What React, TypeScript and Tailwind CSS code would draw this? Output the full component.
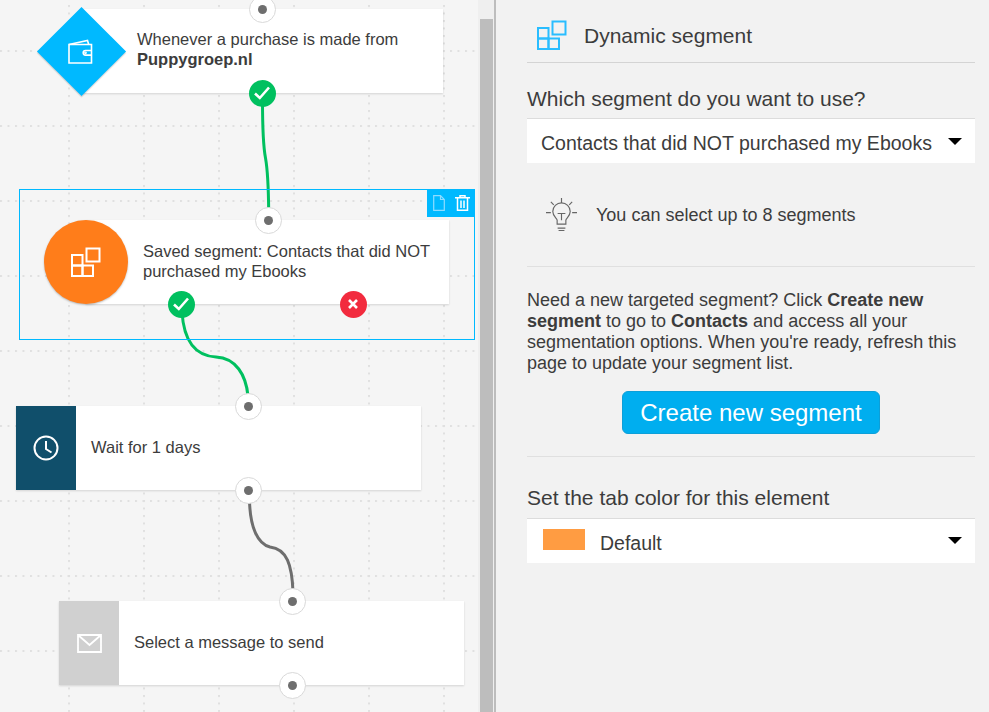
const FONT = "font-['Liberation_Sans',Arial,sans-serif]";

function SegmentIcon({ className }: { className?: string }) {
  return (
    <svg viewBox="0 0 30 30" className={className} fill="none" stroke="currentColor" strokeWidth="2">
      <rect x="1" y="8" width="10.500" height="10.500" />
      <rect x="1" y="18.500" width="10.500" height="10.500" />
      <rect x="11.500" y="18.500" width="10.500" height="10.500" />
      <rect x="15.500" y="1.500" width="13" height="13" />
    </svg>
  );
}

function Port({ x, y }: { x: number; y: number }) {
  return (
    <div
      className="absolute w-[27px] h-[27px] -ml-[13.5px] -mt-[13.5px] rounded-full bg-white border border-[#d9d9d9] flex items-center justify-center"
      style={{ left: x, top: y }}
    >
      <div className="w-[9px] h-[9px] rounded-full bg-[#6e6e6e]" />
    </div>
  );
}

function Badge({ x, y, kind }: { x: number; y: number; kind: "ok" | "no" }) {
  return (
    <div
      className={`absolute w-[27px] h-[27px] -ml-[13.5px] -mt-[13.5px] rounded-full flex items-center justify-center ${
        kind === "ok" ? "bg-[#00c05f]" : "bg-[#f22b3e]"
      }`}
      style={{ left: x, top: y }}
    >
      {kind === "ok" ? (
        <svg viewBox="0 0 18 18" className="w-[18px] h-[18px]" fill="none" stroke="#fff" strokeWidth="2.6">
          <path d="M2 9.500l4.800 4.500L16 3.500" />
        </svg>
      ) : (
        <svg viewBox="0 0 10 10" className="w-[10px] h-[10px]" fill="none" stroke="#fff" strokeWidth="2.6">
          <path d="M1 1l8 8M9 1l-8 8" />
        </svg>
      )}
    </div>
  );
}

function Canvas() {
  return (
    <div className="relative w-[478px] h-[712px] shrink-0 overflow-hidden bg-[#f5f5f5]">
      {/* dotted grid */}
      <svg className="absolute inset-0" width="478" height="712">
        <defs>
          <pattern id="h" x="0" y="50" width="7.5" height="75" patternUnits="userSpaceOnUse">
            <rect x="0" y="0" width="2" height="2" fill="#e0e0e0" />
          </pattern>
          <pattern id="v" x="68" y="5" width="75" height="7.5" patternUnits="userSpaceOnUse">
            <rect x="0" y="0" width="2" height="2" fill="#e0e0e0" />
          </pattern>
        </defs>
        <rect width="476" height="712" fill="url(#h)" />
        <rect width="476" height="712" fill="url(#v)" />
      </svg>

      {/* trigger */}
      <div className="absolute left-[81px] top-[9px] w-[362px] h-[84px] bg-white shadow-[0_1px_2px_rgba(0,0,0,0.14)] flex items-center pl-[56px] text-[16.5px] leading-[20px] text-[#3c3c3c]">
        <div className="-mt-[5px]">
          Whenever a purchase is made from
          <br />
          <b>Puppygroep.nl</b>
        </div>
      </div>
      <div className="absolute left-[50px] top-[20px] w-[63px] h-[63px] rotate-45 bg-[#00b9ff] shadow-[1px_1px_1px_rgba(0,0,0,0.15)]" />
      <svg viewBox="0 0 25 25" className="absolute left-[67.5px] top-[38.5px] w-[25px] h-[25px]" fill="none" stroke="#fff" strokeWidth="1.6">
        <path d="M1 5.500V24h22.500V5.500z" />
        <path d="M1 5.500L19.500 1.500l1.200 4" />
        <path d="M23.500 11.500h-6a2.300 2.300 0 0 0 0 4.600h6" />
        <circle cx="17.500" cy="13.800" r="0.6" />
      </svg>

      {/* wires */}
      <svg className="absolute inset-0" width="478" height="712" fill="none" strokeWidth="3">
        <path d="M262.500 100C262.500 130 263 145 265.500 158C268 172 268.500 190 268.700 212" stroke="#00c05f" />
        <path d="M182 312C184 345 198 356 216 357C236 358 246 375 248 396" stroke="#00c05f" />
        <path d="M249.500 500C250 528 258 544 270 547C287 549 292 565 293 592" stroke="#6e6e6e" />
      </svg>

      {/* segment */}
      <div className="absolute left-[19px] top-[189px] w-[456px] h-[151px] border border-[#00b9ff]">
        <div className="absolute right-[-1px] top-[-1px] w-[48px] h-[28px] bg-[#00b9ff] flex items-center gap-[10px] pl-[6px]">
          <svg viewBox="0 0 12 16" className="w-[12px] h-[16px]" fill="none" stroke="#8fdcff" strokeWidth="1.2">
            <path d="M.7.7h6.800l3.800 3.800v10.800H.7zM7.500.7v3.800h3.800" />
          </svg>
          <svg viewBox="0 0 15 16" className="w-[15px] h-[16px]" fill="none" stroke="#fff" strokeWidth="1.5">
            <path d="M0 2.800h15M5 2.800V.8h5v2M2.500 2.800v12.500h10V2.800M6 5.500v7.500M9 5.500v7.500" />
          </svg>
        </div>
      </div>
      <div className="absolute left-[86px] top-[220px] w-[363px] h-[84px] bg-white shadow-[0_1px_2px_rgba(0,0,0,0.14)] flex items-center pl-[57px] text-[16.5px] leading-[20px] text-[#3c3c3c]">
        <div className="-mt-[3px]">
          Saved segment: Contacts that did NOT
          <br />
          purchased my Ebooks
        </div>
      </div>
      <div className="absolute left-[44px] top-[220px] w-[84px] h-[84px] rounded-full bg-[#ff7d1a] shadow-[0_1px_2px_rgba(0,0,0,0.25)] flex items-center justify-center text-white">
        <SegmentIcon className="w-[30px] h-[30px]" />
      </div>

      {/* wait */}
      <div className="absolute left-[16px] top-[406px] w-[405px] h-[84px] bg-white shadow-[0_1px_2px_rgba(0,0,0,0.14)] flex items-center text-[16.5px] text-[#3c3c3c]">
        <div className="w-[60px] h-full bg-[#104f6b] flex items-center justify-center">
          <svg viewBox="0 0 26 26" className="w-[26px] h-[26px]" fill="none" stroke="#fff" strokeWidth="2">
            <circle cx="13" cy="13" r="11.500" />
            <path d="M13 6v8l5.500 3.500" />
          </svg>
        </div>
        <span className="ml-[15px] -mt-[1px]">Wait for 1 days</span>
      </div>

      {/* message */}
      <div className="absolute left-[59px] top-[601px] w-[405px] h-[84px] bg-white shadow-[0_1px_2px_rgba(0,0,0,0.14)] flex items-center text-[16.5px] text-[#3c3c3c]">
        <div className="w-[60px] h-full bg-[#d0d0d0] flex items-center justify-center">
          <svg viewBox="0 0 25 19" className="w-[25px] h-[19px]" fill="none" stroke="#fff" strokeWidth="1.8">
            <path d="M1 1h23v17H1zM1 1l11.500 10L24 1" />
          </svg>
        </div>
        <span className="ml-[15px] -mt-[1px]">Select a message to send</span>
      </div>

      <Port x={262} y={9} />
      <Port x={268} y={220} />
      <Port x={248} y={406} />
      <Port x={248} y={490} />
      <Port x={292} y={601} />
      <Port x={292} y={685} />
      <Badge x={262} y={93} kind="ok" />
      <Badge x={181} y={304} kind="ok" />
      <Badge x={353} y={304} kind="no" />
    </div>
  );
}

function Caret() {
  return <div className="w-0 h-0 border-x-[7.500px] border-x-transparent border-t-[7px] border-t-black" />;
}

export default function App() {
  return (
    <div className={`${FONT} w-[989px] h-[712px] overflow-hidden flex bg-[#f2f2f2]`}>
      <Canvas />

      {/* scrollbar */}
      <div className="w-[18px] h-[712px] shrink-0 bg-[#efefef] border-r-2 border-[#bdbdbd] pt-[19px] pl-[2px]">
        <div className="w-[13px] h-full bg-[#bdbdbd]" />
      </div>

      <div className="flex-1 pl-[31px] pr-[14px] text-[#3c3c3c]">
        <div className="h-[63px] border-b border-[#d4d4d4] flex items-start pt-[20px] pl-[10px] gap-[17px]">
          <SegmentIcon className="w-[30px] h-[30px] text-[#29bdff]" />
          <span className="text-[21px] leading-[30px] mt-[1px]">Dynamic segment</span>
        </div>

        <div className="mt-[23px] text-[21px] leading-[26px]">Which segment do you want to use?</div>
        <div className="mt-[6px] h-[45px] bg-white border-t border-[#dcdcdc] flex items-center justify-between pl-[14px] pr-[13px] text-[19.5px]">
          <span className="mt-[6px]">Contacts that did NOT purchased my Ebooks</span>
          <div className="mt-[1px]">
            <Caret />
          </div>
        </div>

        <div className="h-[104px] border-b border-[#e0e0e0] flex items-center pl-[19px] gap-[19px]">
          <svg viewBox="0 0 32 34" className="w-[31px] h-[33px]" fill="none" stroke="#666" strokeWidth="1.2">
            <path d="M16 0v5M5 4l3 3M27 4l-3 3M0 15h5M27 15h5" />
            <path d="M11.500 27v-4c0-2-4.500-4-4.500-9a9 9 0 0 1 18 0c0 5-4.500 7-4.500 9v4zM12 16h8M16 16v7M12 31h8M13 33.500h6" />
          </svg>
          <span className="text-[18px] mt-[2px]">You can select up to 8 segments</span>
        </div>

        <p className="mt-[23px] text-[18px] leading-[21px]">
          Need a new targeted segment? Click <b>Create new segment</b> to go to <b>Contacts</b> and access all your
          segmentation options. When you're ready, refresh this page to update your segment list.
        </p>

        <div className="mt-[17px] flex justify-center">
          <button className="w-[258px] h-[43px] rounded-[6px] bg-[#00aeef] border border-[#0d9fd8] text-white text-[24px]">
            Create new segment
          </button>
        </div>

        <div className="mt-[22px] border-t border-[#e0e0e0]" />

        <div className="mt-[28px] text-[21px] leading-[26px]">Set the tab color for this element</div>
        <div className="mt-[7px] h-[45px] bg-white border-t border-[#dcdcdc] flex items-center pl-[16px] pr-[13px] text-[19.5px]">
          <div className="w-[42px] h-[21px] bg-[#ff9c42] -mt-[3px]" />
          <span className="ml-[15px] mt-[6px]">Default</span>
          <div className="ml-auto -mt-[2px]">
            <Caret />
          </div>
        </div>
      </div>
    </div>
  );
}
